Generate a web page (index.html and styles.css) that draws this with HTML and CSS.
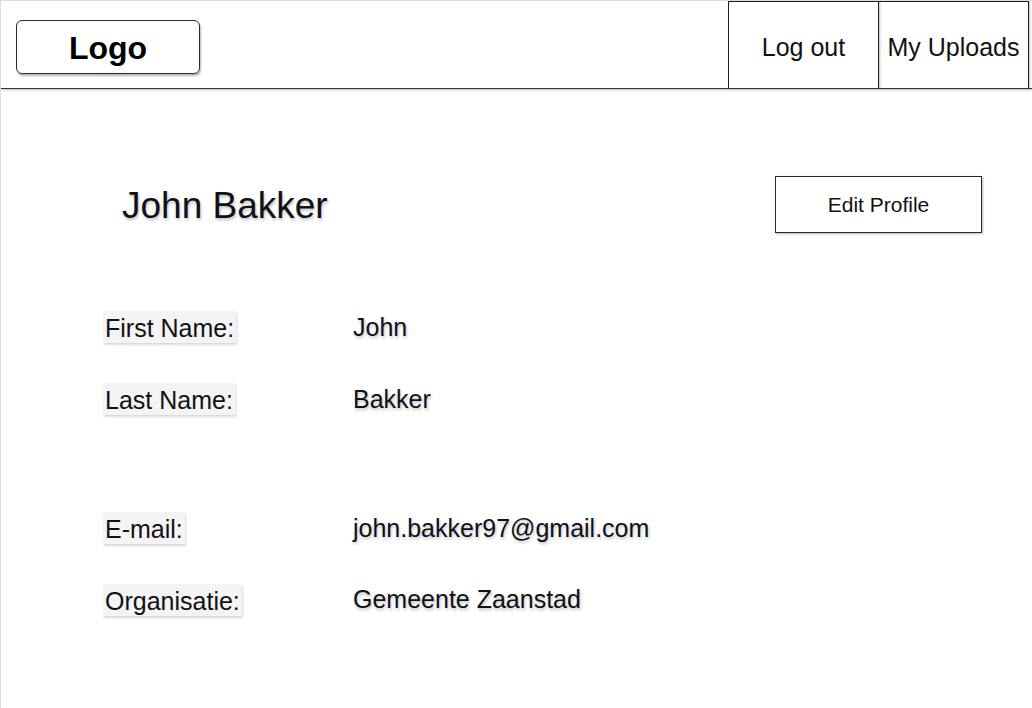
FILE: index.html
```html
<!DOCTYPE html>
<html lang="en">
<head>
<meta charset="utf-8">
<title>Profile</title>
<link rel="stylesheet" href="styles.css">
</head>
<body>
<div class="page">
  <header class="topbar">
    <div class="logo">Logo</div>
    <nav class="nav">
      <a class="nav-item nav-first">Log out</a>
      <a class="nav-item">My Uploads</a>
    </nav>
  </header>
  <main class="content">
    <div class="title-row">
      <h1 class="name">John Bakker</h1>
      <button class="edit-btn">Edit Profile</button>
    </div>
    <div class="fields">
      <div class="field">
        <span class="label">First Name:</span>
        <span class="value">John</span>
      </div>
      <div class="field">
        <span class="label">Last Name:</span>
        <span class="value">Bakker</span>
      </div>
      <div class="field field-gap">
        <span class="label">E-mail:</span>
        <span class="value">john.bakker97@gmail.com</span>
      </div>
      <div class="field">
        <span class="label">Organisatie:</span>
        <span class="value value-up">Gemeente Zaanstad</span>
      </div>
    </div>
  </main>
</div>
</body>
</html>
```

FILE: styles.css
```css
html, body {
  margin: 0;
  padding: 0;
  background: #ffffff;
}

.page {
  width: 1032px;
  height: 708px;
  box-sizing: border-box;
  border-top: 1px solid #dcdcdc;
  border-left: 1px solid #dcdcdc;
  font-family: "Liberation Sans", Arial, sans-serif;
  color: #111111;
  overflow: hidden;
}

.topbar {
  height: 87px;
  border-bottom: 1px solid #33333a;
  box-shadow: 0 1px 2px rgba(60, 60, 90, 0.35);
  display: flex;
  align-items: flex-start;
  justify-content: space-between;
}

.logo {
  margin-left: 15px;
  margin-top: 19px;
  width: 184px;
  height: 54px;
  box-sizing: border-box;
  padding-top: 2px;
  border: 1px solid #2a2a2e;
  border-radius: 6px;
  box-shadow: 1px 2px 2px rgba(40, 40, 70, 0.35);
  display: flex;
  align-items: center;
  justify-content: center;
  font-weight: bold;
  font-size: 32px;
  color: #000000;
}

.nav {
  display: flex;
  margin-right: 3px;
}

.nav-item {
  width: 150px;
  height: 87px;
  box-sizing: border-box;
  padding-top: 4px;
  border: 1px solid #1e1e22;
  border-bottom: none;
  display: flex;
  align-items: center;
  justify-content: center;
  font-size: 25px;
  color: #111111;
  box-shadow: 1px 0 2px rgba(40, 40, 70, 0.3);
}

.nav-first {
  width: 151px;
}

.nav-item + .nav-item {
  border-left: none;
}

.content {
  padding: 87px 50px 0 0;
}

.title-row {
  display: flex;
  align-items: center;
  justify-content: space-between;
  height: 57px;
}

.name {
  margin: 2px 0 0 121px;
  font-weight: normal;
  font-size: 37px;
  color: #111111;
  text-shadow: 1px 2px 3px rgba(40, 40, 90, 0.3);
}

.edit-btn {
  width: 207px;
  height: 57px;
  box-sizing: border-box;
  background: #ffffff;
  border: 1px solid #2a2a2e;
  border-radius: 0;
  box-shadow: 1px 1px 2px rgba(40, 40, 70, 0.35);
  font-family: "Liberation Sans", Arial, sans-serif;
  font-size: 21px;
  color: #111111;
  padding: 0 0 0 0;
}

.fields {
  margin-top: 78px;
  display: flex;
  flex-direction: column;
  gap: 40px;
}

.field {
  display: grid;
  grid-template-columns: 250px auto;
  align-items: center;
  height: 32px;
  padding-left: 102px;
}

.field-gap {
  margin-top: 57px;
}

.label {
  justify-self: start;
  height: 32px;
  line-height: 34px;
  padding: 0 2px;
  background: #f4f3f6;
  box-shadow: 1px 2px 2px rgba(60, 60, 110, 0.2);
  font-size: 25px;
  color: #111111;
}

.value {
  font-size: 25px;
  color: #111111;
  text-shadow: 1px 2px 3px rgba(40, 40, 90, 0.3);
}

.value-up {
  margin-top: -1px;
}
```
